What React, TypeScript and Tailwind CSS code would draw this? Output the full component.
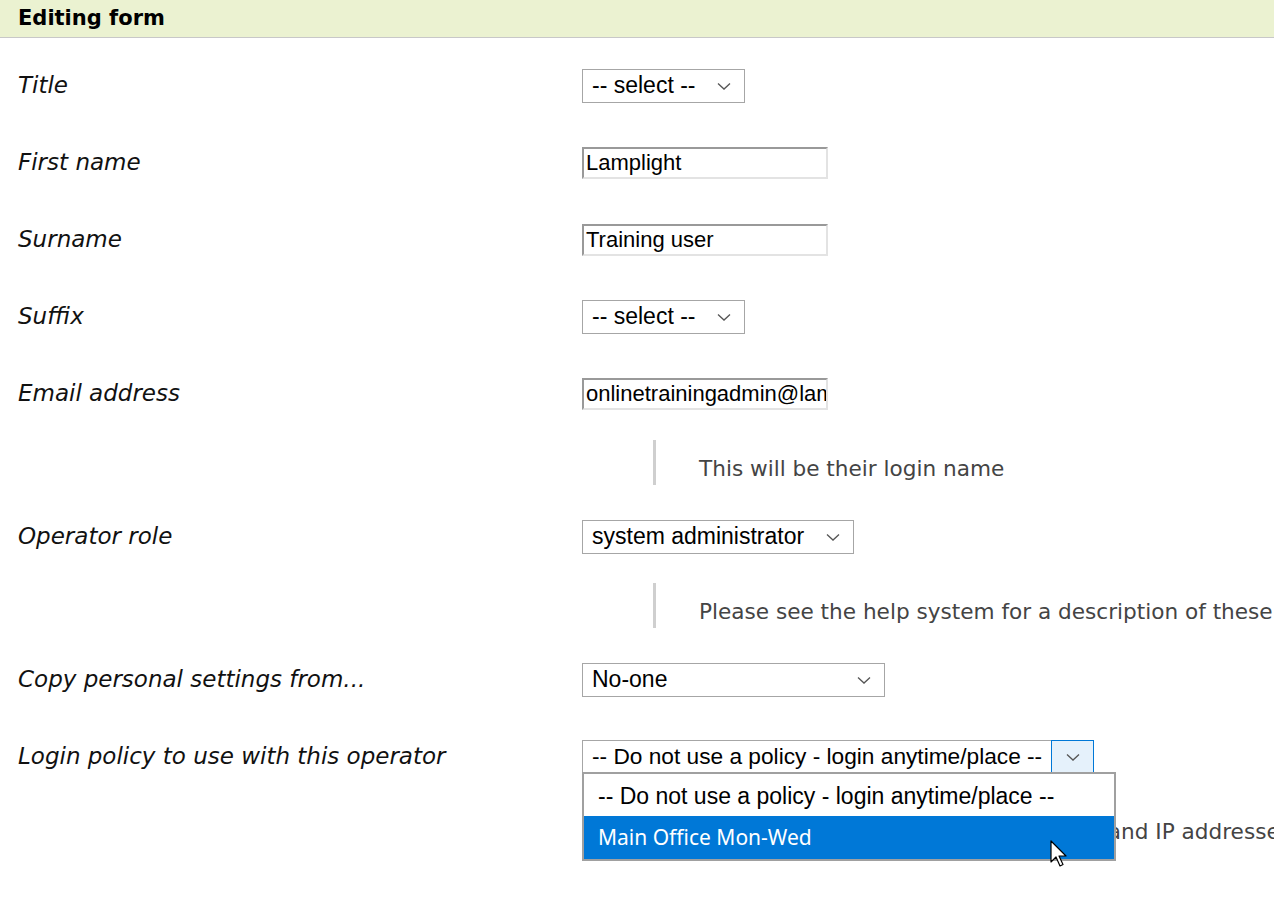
const verdana = { fontFamily: '"DejaVu Sans", Verdana, sans-serif' }

function Chevron({ className = "" }: { className?: string }) {
  return (
    <svg width="16" height="10" viewBox="0 0 16 10" className={className}>
      <polyline points="2,2.5 8,8 14,2.5" fill="none" stroke="#555" strokeWidth="1.3" />
    </svg>
  )
}

function Select({ value, width }: { value: string; width: string }) {
  return (
    <div
      className={`${width} h-[34px] border border-[#a6a6a6] bg-white flex items-center justify-between pl-[9px] pr-[12px] text-[23px] text-black font-['Liberation_Sans',Arial,sans-serif]`}
    >
      <span className="whitespace-nowrap">{value}</span>
      <Chevron />
    </div>
  )
}

function TextInput({ value }: { value: string }) {
  return (
    <div className="w-[246px] h-[32px] border-2 border-t-[#999] border-l-[#999] border-b-[#e3e3e3] border-r-[#e3e3e3] bg-white flex items-center pl-[2px] overflow-hidden text-[22px] text-black whitespace-nowrap font-['Liberation_Sans',Arial,sans-serif]">
      {value}
    </div>
  )
}

function Row({ label, children }: { label: string; children: React.ReactNode }) {
  return (
    <div className="h-[77px] flex items-center">
      <div className="w-[582px] shrink-0 pl-[18px] italic text-[23px] text-[#111] whitespace-nowrap" style={verdana}>
        {label}
      </div>
      <div className="relative">{children}</div>
    </div>
  )
}

function Hint({ text }: { text: string }) {
  return (
    <div className="h-[66px] pl-[653px] pt-[8px] overflow-hidden">
      <div className="flex items-center h-[45px]">
        <div className="w-[3px] h-[45px] shrink-0 bg-[#cfcfcf]" />
        <div className="pl-[43px] pt-[14px] text-[21.6px] text-[#444] whitespace-nowrap" style={verdana}>
          {text}
        </div>
      </div>
    </div>
  )
}

function Cursor() {
  return (
    <svg width="20" height="28" viewBox="0 0 20 28" className="absolute left-[466px] top-[66px]">
      <path d="M1 1 L1 22 L6 17 L10 26 L13 24.5 L9 16 L16 16 Z" fill="#fff" stroke="#000" strokeWidth="1.2" strokeLinejoin="round" />
    </svg>
  )
}

export default function App() {
  return (
    <div className="w-[1274px] h-[919px] bg-white overflow-hidden">
      {/* Header */}
      <div className="h-[38px] bg-[#ebf2d1] border-b border-[#c8c8c8] flex items-center pl-[18px]">
        <span className="font-bold text-[21px] text-black" style={verdana}>
          Editing form
        </span>
      </div>

      <div className="pt-[9px]">
        <Row label="Title">
          <Select value="-- select --" width="w-[163px]" />
        </Row>
        <Row label="First name">
          <TextInput value="Lamplight" />
        </Row>
        <Row label="Surname">
          <TextInput value="Training user" />
        </Row>
        <Row label="Suffix">
          <Select value="-- select --" width="w-[163px]" />
        </Row>
        <Row label="Email address">
          <TextInput value="onlinetrainingadmin@lamplight.online" />
        </Row>
        <Hint text="This will be their login name" />
        <Row label="Operator role">
          <Select value="system administrator" width="w-[272px]" />
        </Row>
        <Hint text="Please see the help system for a description of these roles" />
        <Row label="Copy personal settings from...">
          <Select value="No-one" width="w-[303px]" />
        </Row>
        <Row label="Login policy to use with this operator">
          <div className="w-[512px] h-[34px] border border-[#a6a6a6] bg-white flex items-center justify-between text-[22.7px] text-black font-['Liberation_Sans',Arial,sans-serif]">
            <span className="pl-[9px] whitespace-nowrap">-- Do not use a policy - login anytime/place --</span>
            <div className="w-[43px] h-[34px] shrink-0 -mr-px -my-px border border-[#0078d7] bg-[#e5f1fb] flex items-center justify-center">
              <Chevron />
            </div>
          </div>
          {/* open option list */}
          <div className="absolute left-0 top-[32px] w-[534px] bg-white border-2 border-[#a0a0a0] z-10 text-[23px] font-['Liberation_Sans',Arial,sans-serif]">
            <div className="h-[42px] flex items-center pl-[14px] pt-[4px] text-black whitespace-nowrap">
              -- Do not use a policy - login anytime/place --
            </div>
            <div className="h-[43px] flex items-center pl-[14px] pt-[2px] bg-[#0078d7] text-white whitespace-nowrap" style={{ fontFamily: '"Noto Sans", "Open Sans", sans-serif', fontSize: "21px" }}>
              Main Office Mon-Wed
            </div>
            <Cursor />
          </div>
        </Row>
        <Hint text="Login policies can restrict login times and IP addresses" />
      </div>
    </div>
  )
}
